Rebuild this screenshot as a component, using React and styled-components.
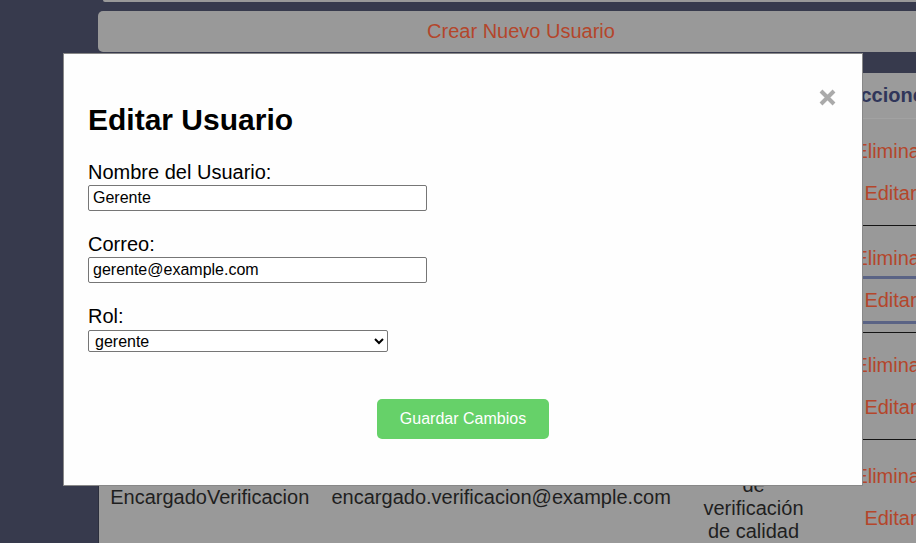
import React from 'react';
import styled, { createGlobalStyle } from 'styled-components';

const GlobalStyle = createGlobalStyle`
    body {
        margin: 0;
        background: #373a4d;
        font-family: "Liberation Sans", Arial, sans-serif;
        overflow: hidden;
    }
`;

const usuarios = [
    { nombre: 'Admin', correo: 'admin@example.com', rol: 'Administrador' },
    { nombre: 'Gerente', correo: 'gerente@example.com', rol: 'gerente', focused: true },
    { nombre: 'Operador', correo: 'operador@example.com', rol: 'Operador' },
    { nombre: 'EncargadoVerificacion', correo: 'encargado.verificacion@example.com', rol: 'Encargado de verificación de calidad' },
];

const CloseIcon = () => (
    <svg width="17" height="17" viewBox="0 0 17 17">
        <path d="M2 2 L15 15 M15 2 L2 15" stroke="#aaaaaa" strokeWidth="4" strokeLinecap="butt" />
    </svg>
);

class App extends React.Component {
    render() {
        return (
            <>
                <GlobalStyle />
                <Page>
                    <Sidebar />
                    <Main>
                        <TopCard />
                        <CreateButton>Crear Nuevo Usuario</CreateButton>
                        <Table>
                            <colgroup>
                                <col style={{ width: 222 }} />
                                <col style={{ width: 361 }} />
                                <col style={{ width: 144 }} />
                                <col style={{ width: 130 }} />
                            </colgroup>
                            <thead>
                                <tr>
                                    <Th>Nombre</Th>
                                    <Th>Correo</Th>
                                    <Th>Rol</Th>
                                    <Th>Acciones</Th>
                                </tr>
                            </thead>
                            <tbody>
                                {usuarios.map(u => (
                                    <Row key={u.correo}>
                                        <Td>{u.nombre}</Td>
                                        <Td>{u.correo}</Td>
                                        <Td>{u.rol}</Td>
                                        <Td>
                                            <ActionButton>Eliminar</ActionButton>
                                            <ActionButton focused={u.focused}>Editar</ActionButton>
                                        </Td>
                                    </Row>
                                ))}
                            </tbody>
                        </Table>
                    </Main>
                </Page>

                <Overlay>
                    <Modal>
                        <Close aria-label="Cerrar"><CloseIcon /></Close>
                        <Title>Editar Usuario</Title>
                        <Field>
                            <Label htmlFor="nombre">Nombre del Usuario:</Label>
                            <Input id="nombre" type="text" defaultValue="Gerente" />
                        </Field>
                        <Field>
                            <Label htmlFor="correo">Correo:</Label>
                            <Input id="correo" type="email" defaultValue="gerente@example.com" />
                        </Field>
                        <Field>
                            <Label htmlFor="rol">Rol:</Label>
                            <Select id="rol" defaultValue="gerente">
                                <option value="admin">admin</option>
                                <option value="gerente">gerente</option>
                                <option value="operador">operador</option>
                            </Select>
                        </Field>
                        <ButtonRow>
                            <SaveButton>Guardar Cambios</SaveButton>
                        </ButtonRow>
                    </Modal>
                </Overlay>
            </>
        );
    }
}

const Page = styled.div`
    display: flex;
    height: 543px;
    overflow: hidden;
`;

const Sidebar = styled.aside`
    flex: 0 0 98px;
    background: #373a4d;
`;

const Main = styled.main`
    flex: 0 0 857px;
    display: flex;
    flex-direction: column;

    > * {
        flex-shrink: 0;
    }
`;

const TopCard = styled.div`
    height: 2px;
    margin-left: 5px;
    background: #999999;
    border-radius: 0 0 5px 5px;
`;

const CreateButton = styled.button`
    width: 846px;
    height: 41px;
    margin-top: 9px;
    border: none;
    border-radius: 5px;
    background: #999999;
    color: #b4462b;
    font-family: "Liberation Sans", Arial, sans-serif;
    font-size: 20px;
    cursor: pointer;
`;

const Table = styled.table`
    margin-top: 21px;
    width: 857px;
    table-layout: fixed;
    border-collapse: collapse;
    background: #999999;
    border-left: 1px solid #2c2f3d;
    font-size: 20px;
    line-height: 23px;
    color: #1f1f1f;
`;

const Th = styled.th`
    padding: 11px;
    background: #9b9b9b;
    color: #30365a;
    font-weight: bold;
    text-align: center;
    white-space: nowrap;
    border-bottom: 1px solid #a2a2a2;
`;

const Row = styled.tr`
    border-bottom: 1px solid #141414;
`;

const Td = styled.td`
    padding: 11px;
    text-align: center;
    vertical-align: middle;
`;

const ActionButton = styled.button`
    display: block;
    width: 100%;
    height: 42px;
    padding: 0;
    border: none;
    background: none;
    color: #b4462b;
    font-family: "Liberation Sans", Arial, sans-serif;
    font-size: 20px;
    outline: ${p => (p.focused ? '3px solid #5a6385' : 'none')};
    cursor: pointer;
`;

const Overlay = styled.div`
    position: fixed;
    inset: 0;
    display: flex;
    align-items: flex-start;
    justify-content: flex-start;
    padding: 53px 0 0 63px;
`;

const Modal = styled.div`
    position: relative;
    box-sizing: border-box;
    width: 800px;
    height: 433px;
    padding: 24px;
    background: #fefefe;
    border: 1px solid #888888;
`;

const Close = styled.span`
    position: absolute;
    top: 35px;
    right: 26px;
    display: flex;
    cursor: pointer;
`;

const Title = styled.h2`
    margin: 25px 0 24px;
    font-size: 30px;
    line-height: 34px;
    font-weight: bold;
    color: #000;
`;

const Field = styled.div`
    margin-bottom: 22px;
`;

const Label = styled.label`
    display: block;
    margin-bottom: 1px;
    font-size: 20px;
    line-height: 23px;
    color: #000;
`;

const Input = styled.input`
    box-sizing: border-box;
    display: block;
    width: 339px;
    height: 26px;
    margin: 0;
    padding: 1px 4px;
    border: 1px solid #767676;
    border-radius: 2px;
    font-family: "Liberation Sans", Arial, sans-serif;
    font-size: 16px;
    color: #000;
`;

const Select = styled.select`
    box-sizing: border-box;
    display: block;
    width: 300px;
    height: 22px;
    margin: 2px 0 0;
    padding: 0 2px;
    border: 1px solid #767676;
    border-radius: 2px;
    background: #fff;
    font-family: "Liberation Sans", Arial, sans-serif;
    font-size: 16px;
    color: #000;
`;

const ButtonRow = styled.div`
    display: flex;
    justify-content: center;
    margin-top: 47px;
`;

const SaveButton = styled.button`
    height: 40px;
    padding: 0 23px;
    border: none;
    border-radius: 5px;
    background: #66d169;
    color: #fff;
    font-family: "Liberation Sans", Arial, sans-serif;
    font-size: 16px;
    cursor: pointer;
`;

export default App;
